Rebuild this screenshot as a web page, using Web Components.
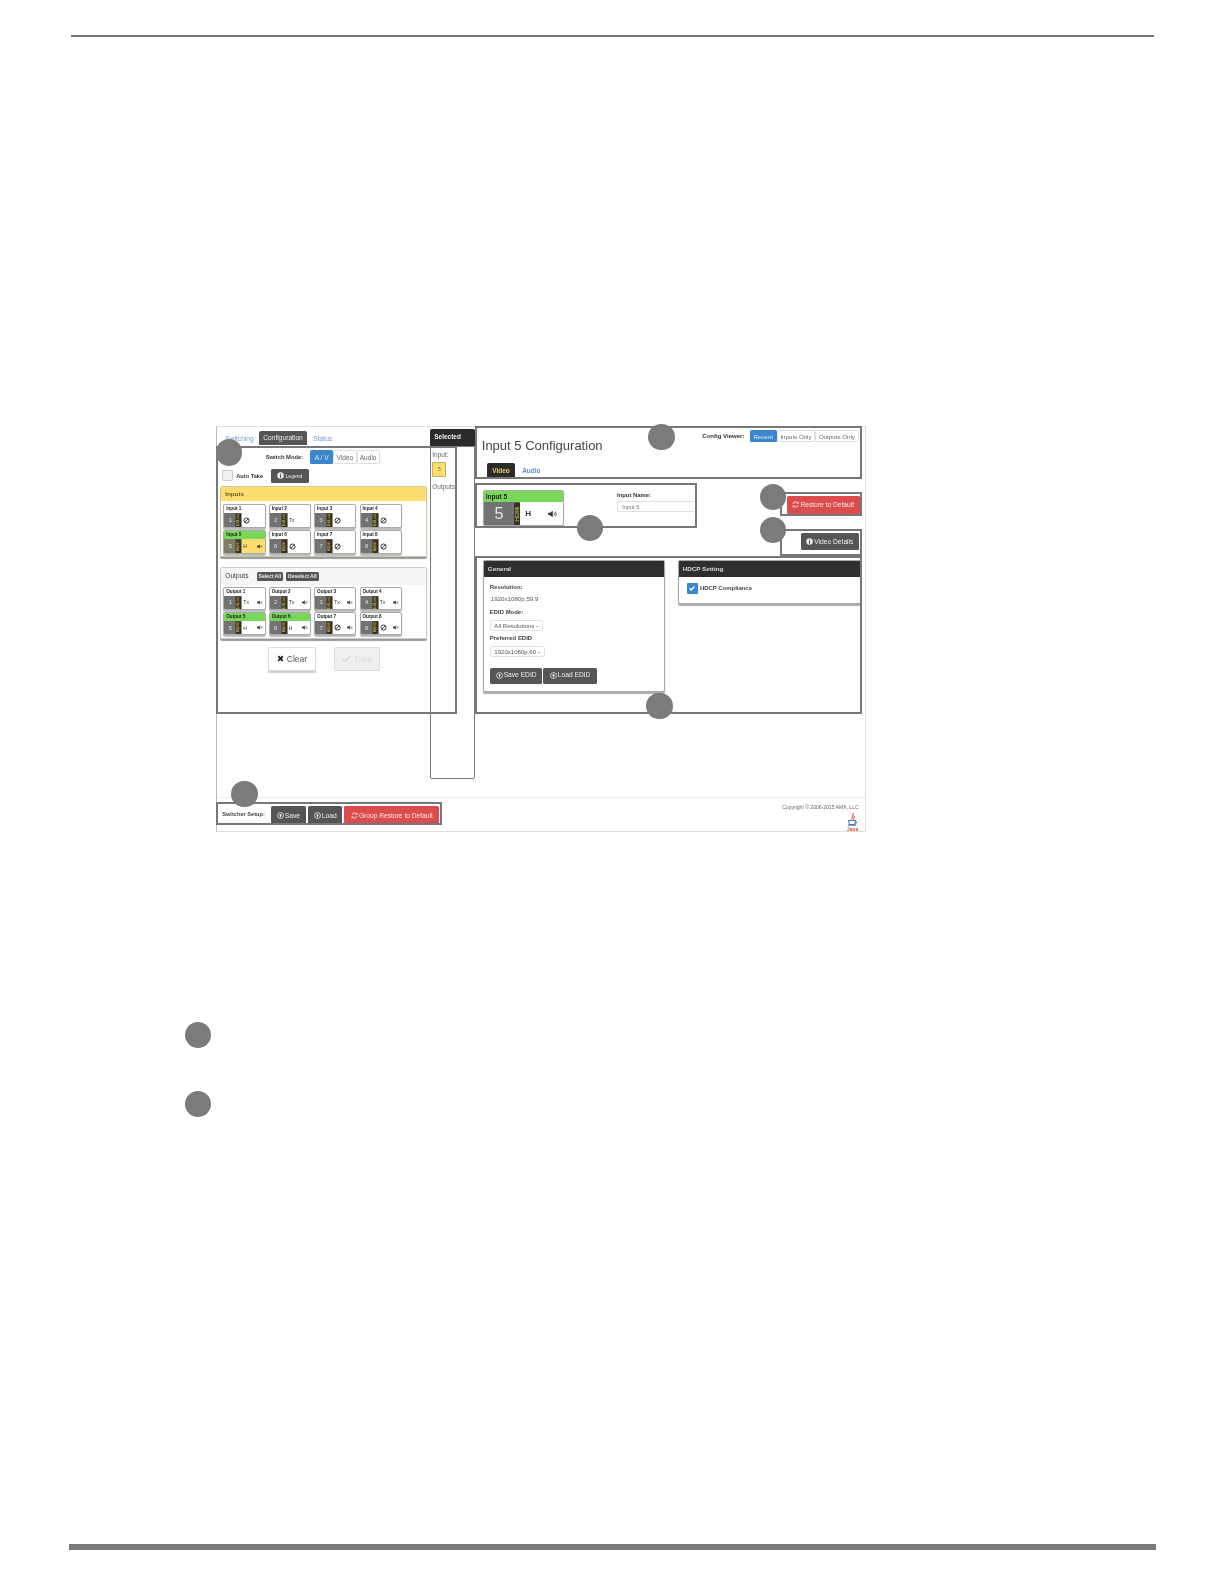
<!DOCTYPE html>
<html lang="en">
<head>
<meta charset="utf-8">
<title>Input 5 Configuration</title>
<style>
  html, body { margin: 0; background: #fff; }
  body { font-family: "Liberation Sans", Arial, sans-serif; color: #444; }
</style>
</head>
<body>
<sw-page></sw-page>
<script>
const ICONS = {
  ban: '<svg viewBox="0 0 10 10"><circle cx="5" cy="5" r="3.6" fill="none" stroke="currentColor" stroke-width="1.4"/><path d="M2.5 7.5l5-5" stroke="currentColor" stroke-width="1.3"/></svg>',
  speaker: '<svg viewBox="0 0 12 10"><path d="M0 3.4h2.2L5.6 1v8L2.2 6.6H0z" fill="currentColor"/><path d="M7.2 3.2q1.2 1.8 0 3.6M9 2q2 3 0 6" fill="none" stroke="currentColor" stroke-width=".9"/></svg>',
  arrow: '<svg viewBox="0 0 10 10"><circle cx="5" cy="5" r="4.2" fill="none" stroke="currentColor" stroke-width="1.1"/><path d="M5 2.4L2.8 5h1.4v2.4h1.6V5h1.4z" fill="currentColor"/></svg>',
  info: '<svg viewBox="0 0 10 10"><circle cx="5" cy="5" r="4.6" fill="currentColor"/><path d="M4.2 2h1.6v1.4H4.2zM4.2 4.2h1.6V8H4.2z" fill="#555"/></svg>',
  refresh: '<svg viewBox="0 0 10 10"><path d="M1.4 4.2A3.7 3.7 0 0 1 7.8 2.6M8.6 5.8A3.7 3.7 0 0 1 2.2 7.4" fill="none" stroke="currentColor" stroke-width="1.3"/><path d="M9.2 .6v3.2H6zM.8 9.4V6.2H4z" fill="currentColor"/></svg>',
  cross: '<svg viewBox="0 0 10 10"><path d="M1.8 1.8l6.4 6.4M8.2 1.8L1.8 8.2" stroke="currentColor" stroke-width="2.6"/></svg>',
  check: '<svg viewBox="0 0 10 10"><path d="M1 5.4l2.8 2.8L9 2.4" fill="none" stroke="currentColor" stroke-width="2.2"/></svg>',
};

class ShadowBase extends HTMLElement {
  render(html) {
    if (!this.shadowRoot) this.attachShadow({ mode: "open" });
    this.shadowRoot.innerHTML = html;
  }
}

// one connector tile of the switcher
class SwTile extends ShadowBase {
  connectedCallback() {
    const a = (n, d = "") => this.getAttribute(n) ?? d;
    const big = this.hasAttribute("big");
    const st = a("status", "ban");
    const status = st === "ban" ? `<span class="ic">${ICONS.ban}</span>` : `<span class="st">${st}</span>`;
    this.render(`
      <style>
        :host { display: block; }
        .tile { height: 100%; box-sizing: border-box; border: 1px solid #aaa; border-radius: 2px; overflow: hidden; display: flex; flex-direction: column; background: #fff; box-shadow: 0 1px 1px #bbb; }
        .head { height: ${big ? 11 : 8}px; line-height: ${big ? 11 : 8}px; font-size: ${big ? 6.5 : 4.6}px; font-weight: bold; color: #222; padding-left: 2px; flex: none; }
        .on .head { background: #79d85a; }
        .body { flex: 1; display: flex; align-items: stretch; min-height: 0; }
        .num { width: ${big ? 30 : 12}px; background: #727272; color: #e4e4e4; display: flex; align-items: center; justify-content: center; font-size: ${big ? 16 : 5.6}px; flex: none; }
        .sel .num { background: #7f7d68; }
        .strip { width: ${big ? 6 : 5.5}px; background: #35301f; color: #e6cf60; writing-mode: vertical-rl; transform: rotate(180deg); font-size: ${big ? 5.6 : 3.8}px; text-align: center; line-height: ${big ? 6 : 5.5}px; overflow: hidden; flex: none; }
        .rest { flex: 1; display: flex; align-items: center; justify-content: space-between; padding: 0 ${big ? 4 : 2}px 0 ${big ? 5 : 1.5}px; color: #333; }
        .sel .rest { background: #fedd70; }
        .ic { width: 7px; height: 7px; display: block; } .ic svg { display: block; width: 100%; height: 100%; }
        .st { font-size: ${big ? 8 : 5}px; font-weight: ${big ? "bold" : "normal"}; }
        .spk { width: ${big ? 10 : 6}px; height: ${big ? 8 : 5}px; display: block; color: #333; } .spk svg { display: block; width: 100%; height: 100%; }
      </style>
      <div class="tile ${a("state")}">
        <div class="head">${a("label")}</div>
        <div class="body">
          <div class="num">${a("num")}</div>
          <div class="strip">${a("port", "HDMI")}</div>
          <div class="rest">${status}${this.hasAttribute("audio") ? `<span class="spk">${ICONS.speaker}</span>` : ""}</div>
        </div>
      </div>`);
  }
}

class SwBtn extends ShadowBase {
  connectedCallback() {
    const icon = this.getAttribute("icon");
    this.render(`
      <style>
        :host { display: inline-flex; box-sizing: border-box; align-items: center; justify-content: center; gap: 1px; border-radius: 1.5px; background: #555; color: #eee; font-size: 6.6px; white-space: nowrap; }
        :host([kind=red]) { background: #db4c4c; color: #fbe6e6; }
        :host([kind=blue]) { background: #3a87cd; color: #dcebf8; }
        :host([kind=plain]) { background: #fff; color: #666; border: 1px solid #ddd; }
        :host([kind=ghost]) { background: #fff; color: #555; border: 1px solid #ddd; box-shadow: 0 1px 1px #ccc; font-size: 8.5px; gap: 3px; }
        :host([kind=off]) { background: #efefef; color: #ddd; border: 1px solid #ddd; font-size: 8.5px; gap: 3px; }
        svg { width: 7px; height: 7px; display: block; }
        :host([kind=ghost]) svg { color: #222; }
        :host([kind=off]) svg { width: 9px; height: 9px; }
      </style>
      ${icon ? ICONS[icon] : ""}<slot></slot>`);
  }
}

class SwCallout extends ShadowBase {
  connectedCallback() {
    this.render(`<style>:host { display: block; width: 26px; height: 26px; border-radius: 50%; background: #7b7b7b; }</style>`);
  }
}

// bracket drawn over the screenshot
class SwFrame extends ShadowBase {
  connectedCallback() {
    this.render(`<style>:host { display: block; position: absolute; box-sizing: border-box; border: 2px solid #777; pointer-events: none; }</style>`);
  }
}

class SwPanel extends ShadowBase {
  connectedCallback() {
    this.render(`
      <style>
        :host { display: block; box-sizing: border-box; border: 1px solid #aaa; border-radius: 2px; box-shadow: 0 1px 1px #aaa; background: #fff; }
        .head { height: 16px; line-height: 15px; background: #2f2f2f; color: #ddd; font-size: 6.2px; font-weight: bold; padding-left: 4px; }
      </style>
      <div class="head">${this.getAttribute("heading")}</div>
      <slot></slot>`);
  }
}

class SwSwitching extends ShadowBase {
  connectedCallback() {
    const tiles = (names, data) => data.map((d, i) =>
      `<sw-tile label="${names} ${i + 1}" num="${i + 1}" ${d}></sw-tile>`).join("");
    const inTiles = tiles("Input", [
      'port="DXLink"', 'port="DXLink" status="Tx"', 'port="DXLink"', 'port="DXLink"',
      'state="on sel" status="H" audio', '', '', '',
    ]);
    const outTiles = tiles("Output", [
      'port="DXLink" status="Tx" audio', 'port="DXLink" status="Tx" audio', 'port="DXLink" status="Tx" audio', 'port="DXLink" status="Tx" audio',
      'state="on" status="H" audio', 'state="on" status="H" audio', 'audio', 'audio',
    ]);
    this.render(`
      <style>
        :host { display: block; width: 210px; font-size: 6.5px; color: #444; }
        .tabs { display: flex; align-items: center; height: 14px; padding: 4px 0 0 8px; font-size: 6.6px; color: #6f9bd3; }
        .tabs b { font-weight: normal; background: #555; color: #eee; border-radius: 2px 2px 0 0; height: 14px; line-height: 14px; width: 48px; text-align: center; margin: 0 6px 0 5px; }
        .mode { display: flex; align-items: center; height: 13px; margin-top: 5px; padding-left: 48px; }
        .mode label { font-weight: bold; font-size: 5.8px; width: 44px; color: #333; }
        .mode sw-btn { height: 13px; width: 23px; font-size: 6.5px; }
        .auto { display: flex; align-items: center; height: 14px; margin-top: 5px; padding-left: 5px; font-size: 5.6px; font-weight: bold; color: #333; }
        .box { width: 9px; height: 9px; border: 1px solid #ccd; background: #eee; border-radius: 1px; margin-right: 3px; }
        .auto sw-btn { width: 37px; height: 14px; margin-left: 8px; font-size: 5px; font-weight: normal; }
        .group { margin: 3px 2px 0 3px; box-sizing: border-box; height: 71px; border: 1px solid #c9c9a0; border-radius: 2px; box-shadow: 0 1px 1px #999; }
        .group .title { height: 14px; line-height: 14px; background: #fedd70; padding-left: 4px; font-weight: bold; font-size: 6.2px; color: #6a5a20; }
        .grid { display: grid; grid-template-columns: repeat(4, 42px); grid-auto-rows: 24px; column-gap: 3px; row-gap: 2px; padding: 3px 0 0 2px; }
        .out { margin-top: 9px; height: 72px; border-color: #ccc; }
        .out .title { height: 17px; display: flex; align-items: center; gap: 3px; background: #f5f5f5; color: #444; font-size: 6.6px; font-weight: normal; }
        .out .title span { width: 28px; }
        .out sw-btn { height: 9px; font-size: 5px; font-weight: bold; padding: 0 2px; }
        .out .grid { grid-auto-rows: 23px; padding-top: 2px; }
        .actions { display: flex; gap: 18px; margin-top: 8px; padding-left: 50px; }
        .actions sw-btn { height: 23px; }
      </style>
      <div class="tabs"><span>Switching</span><b>Configuration</b><span>Status</span></div>
      <div class="mode"><label>Switch Mode:</label><sw-btn kind="blue">A / V</sw-btn><sw-btn kind="plain">Video</sw-btn><sw-btn kind="plain">Audio</sw-btn></div>
      <div class="auto"><span class="box"></span>Auto Take<sw-btn icon="info">Legend</sw-btn></div>
      <div class="group"><div class="title">Inputs</div><div class="grid">${inTiles}</div></div>
      <div class="group out"><div class="title"><span>Outputs</span><sw-btn>Select All</sw-btn><sw-btn>Deselect All</sw-btn></div><div class="grid">${outTiles}</div></div>
      <div class="actions"><sw-btn kind="ghost" icon="cross" style="width:48px">Clear</sw-btn><sw-btn kind="off" icon="check" style="width:45px">Take</sw-btn></div>`);
  }
}

class SwSelected extends ShadowBase {
  connectedCallback() {
    this.render(`
      <style>
        :host { display: block; width: 44px; margin-left: 1px; padding-top: 2px; font-size: 6.4px; color: #666; }
        .head { height: 17px; line-height: 16px; background: #2b2b2b; color: #eee; font-weight: bold; padding-left: 4px; border-radius: 2px 2px 0 0; }
        p { margin: 5px 0 0 2px; line-height: 8px; }
        .chip { width: 12px; height: 13px; margin: 2px 0 0 2px; background: #fedd70; border: 1px solid #c8b25a; border-radius: 1px; text-align: center; line-height: 13px; font-size: 5px; }
        p + .chip + p { margin-top: 6px; }
      </style>
      <div class="head">Selected</div>
      <p>Input:</p>
      <div class="chip">5</div>
      <p>Outputs</p>`);
  }
}

class SwConfig extends ShadowBase {
  connectedCallback() {
    this.render(`
      <style>
        :host { display: block; flex: 1; min-width: 0; font-size: 6.4px; color: #555; }
        .top { display: flex; justify-content: space-between; height: 51px; margin-right: 4px; border-bottom: 1px solid #222; padding-left: 7px; box-sizing: border-box; }
        h1 { font-size: 12.9px; font-weight: normal; color: #444; line-height: 16px; margin: 11px 0 0; }
        .tabs { display: flex; align-items: center; margin: 8px 0 0 5px; height: 15px; font-weight: bold; font-size: 6.4px; color: #5d8fd0; }
        .tabs b { width: 28px; height: 15px; line-height: 15px; text-align: center; background: #2b2b2b; color: #e8d060; border-radius: 2px 2px 0 0; margin-right: 7px; }
        .viewer { display: flex; align-items: center; height: 12px; margin-top: 3px; margin-right: 2px; }
        .viewer label { font-weight: bold; font-size: 6px; color: #333; margin-right: 5px; }
        .viewer sw-btn { height: 12px; font-size: 6.1px; }
        .mid { display: flex; height: 76px; padding-left: 8px; }
        .tile { width: 80px; height: 36px; margin-top: 11px; }
        .field { margin: 12px 0 0 53px; width: 76px; }
        .field label { display: block; font-weight: bold; font-size: 5.8px; color: #333; line-height: 9px; }
        .field div { height: 11px; line-height: 10px; box-sizing: border-box; border: 1px solid #e0e0e0; border-right: 0; padding-left: 4px; font-size: 5.6px; margin-top: 1px; color: #777; }
        .acts { margin-left: auto; margin-right: 5px; display: flex; flex-direction: column; align-items: flex-end; }
        .acts sw-btn:first-child { width: 72px; height: 18px; margin-top: 17px; }
        .acts sw-btn:last-child { width: 57px; height: 17px; margin-top: 19px; margin-right: 1px; }
        .panels { display: flex; align-items: flex-start; gap: 13px; padding: 4px 4px 0 8px; }
        .panels sw-panel { width: 181px; }
        .panels .hdcp { width: 182px; }
        .gen { height: 131px; }
        .gen .in { padding: 4px 0 0 6px; font-size: 6.1px; line-height: 12.5px; }
        .gen b { display: block; color: #444; font-size: 5.9px; }
        .gen span { display: block; margin-left: 1px; font-size: 6.1px; }
        .dd { display: inline-block; border: 1px solid #e2e2e2; border-radius: 2px; height: 11px; line-height: 10px; box-sizing: border-box; padding: 0 3.5px; font-size: 6px; margin: 1px 0 1px; }
        .dd::after { content: ""; display: inline-block; margin-left: 2px; border: 1.5px solid transparent; border-top-color: #555; border-bottom: 0; vertical-align: middle; }
        .row { display: flex; gap: 1px; margin-top: 9px; }
        .row sw-btn { height: 16px; }
        .hdcp { height: 44px; }
        .hd { display: flex; align-items: center; padding: 6px 0 0 8px; font-weight: bold; font-size: 5.9px; gap: 2px; color: #444; }
        .hd i { width: 11px; height: 11px; background: #3a87cd; border-radius: 1px; color: #fff; display: flex; align-items: center; justify-content: center; }
        .hd svg { width: 6px; height: 6px; display: block; }
      </style>
      <div class="top">
        <div><h1>Input 5 Configuration</h1><div class="tabs"><b>Video</b><span>Audio</span></div></div>
        <div class="viewer"><label>Config Viewer:</label><sw-btn kind="blue" style="width:27px">Recent</sw-btn><sw-btn kind="plain" style="width:38px">Inputs Only</sw-btn><sw-btn kind="plain" style="width:43px">Outputs Only</sw-btn></div>
      </div>
      <div class="mid">
        <sw-tile class="tile" big state="on" label="Input 5" num="5" status="H" audio></sw-tile>
        <div class="field"><label>Input Name:</label><div>Input 5</div></div>
        <div class="acts"><sw-btn kind="red" icon="refresh">Restore to Default</sw-btn><sw-btn icon="info">Video Details</sw-btn></div>
      </div>
      <div class="panels">
        <sw-panel class="gen" heading="General"><div class="in">
          <b>Resolution:</b><span>1920x1080p,59.9</span>
          <b>EDID Mode:</b><div class="dd">All Resolutions</div>
          <b>Preferred EDID</b><div class="dd">1920x1080p,60</div>
          <div class="row"><sw-btn icon="arrow" style="width:52px">Save EDID</sw-btn><sw-btn icon="arrow" style="width:53px">Load EDID</sw-btn></div>
        </div></sw-panel>
        <sw-panel class="hdcp" heading="HDCP Setting"><div class="hd"><i>${ICONS.check}</i>HDCP Compliance</div></sw-panel>
      </div>`);
  }
}

class SwSetupBar extends ShadowBase {
  connectedCallback() {
    this.render(`
      <style>
        :host { display: flex; height: 34px; box-sizing: border-box; border-top: 1px solid #eee; padding: 8px 6px 0 5px; font-size: 6.4px; }
        label { font-weight: bold; font-size: 5.6px; color: #444; width: 48px; margin-top: 5px; }
        sw-btn { height: 18px; margin-right: 2px; }
        .copy { margin-left: auto; margin-top: -2px; text-align: right; font-size: 5px; color: #666; }
        svg { display: block; width: 12px; height: 19px; margin: 2px 0 0 auto; }
        .java { font: bold 5px "Liberation Sans", Arial, sans-serif; fill: #d8502a; }
      </style>
      <label>Switcher Setup:</label>
      <sw-btn icon="arrow" style="width:35px">Save</sw-btn>
      <sw-btn icon="arrow" style="width:34px">Load</sw-btn>
      <sw-btn kind="red" icon="refresh" style="width:94px">Group Restore to Default</sw-btn>
      <div class="copy">Copyright © 2006-2015 AMX, LLC
        <svg viewBox="0 0 12 19"><path d="M7 1C8 4 5 5 6 8M8.5 4C7.5 5.5 7.5 6.5 8 8" fill="none" stroke="#d8502a" stroke-width="1"/><path d="M2.5 8.5h7l-1 4h-5zM9.5 9.5q2 .3 0 2M2 13h8" fill="none" stroke="#4d7fb0" stroke-width="1"/><text class="java" x="1" y="18.5">Java</text></svg>
      </div>`);
  }
}

class SwFigure extends ShadowBase {
  connectedCallback() {
    // [left, top, width, height] against the figure, these are the drawn-on brackets
    const frames = [
      [0, 20, 238, 265], [256, 0, 383, 52], [256, 56, 220, 45], [558, 65, 81, 24],
      [558, 102, 81, 26], [256, 128, 383, 157], [0, 372, 224, 23],
    ].map(([l, t, w, h]) => `<sw-frame style="left:${l}px;top:${t}px;width:${w}px;height:${h}px"></sw-frame>`).join("");
    const dots = [[13, 26], [441, 11], [551, 70], [551, 103], [370, 101], [439, 277], [28, 364]]
      .map(([x, y]) => `<sw-callout style="position:absolute;left:${x - 13}px;top:${y - 13}px"></sw-callout>`).join("");
    this.render(`
      <style>
        :host { display: block; position: relative; width: 643px; height: 402px; box-sizing: border-box; border: 1px solid #ddd; border-left-color: #bbb; margin: 385px 0 0 214px; }
        .shot { filter: blur(.35px); }
        .cols { display: flex; height: 366px; }
        .sel { position: absolute; left: 212px; top: 20px; width: 44px; height: 329px; box-sizing: border-box; border: 1px solid #777; border-radius: 0 0 2px 2px; }
        .wrap { position: absolute; inset: -1px; }
      </style>
      <div class="shot">
        <div class="cols"><sw-switching></sw-switching><sw-selected></sw-selected><sw-config></sw-config></div>
        <sw-setup-bar></sw-setup-bar>
      </div>
      <div class="wrap"><div class="sel"></div>${frames}${dots}</div>`);
  }
}

class SwPage extends ShadowBase {
  connectedCallback() {
    this.render(`
      <style>
        /* the measures below come off a 1212px wide view of the page, hence the zoom */
        :host { display: block; zoom: 1.0101; height: 1568px; box-sizing: border-box; padding-top: 35px; overflow: hidden; }
        .rule { height: 2px; width: 1072px; margin-left: 70px; background: #777; }
        .legend { margin: 188px 0 0 183px; display: flex; flex-direction: column; gap: 42px; }
        .foot { height: 6px; width: 1076px; margin: 423px 0 0 68px; background: #7b7b7b; }
      </style>
      <div class="rule"></div>
      <sw-figure></sw-figure>
      <div class="legend"><sw-callout></sw-callout><sw-callout></sw-callout></div>
      <div class="foot"></div>`);
  }
}

customElements.define("sw-tile", SwTile);
customElements.define("sw-btn", SwBtn);
customElements.define("sw-callout", SwCallout);
customElements.define("sw-frame", SwFrame);
customElements.define("sw-panel", SwPanel);
customElements.define("sw-switching", SwSwitching);
customElements.define("sw-selected", SwSelected);
customElements.define("sw-config", SwConfig);
customElements.define("sw-setup-bar", SwSetupBar);
customElements.define("sw-figure", SwFigure);
customElements.define("sw-page", SwPage);
</script>
</body>
</html>
